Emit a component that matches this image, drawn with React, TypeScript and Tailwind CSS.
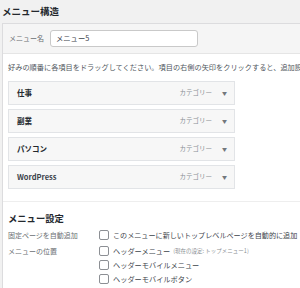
import React from "react";

const font = { fontFamily: '"Noto Sans CJK JP", "Noto Sans", sans-serif' };

function Item({ title, latin }: { title: string; latin?: boolean }) {
  return (
    <div className="flex h-[24px] w-[227px] items-center justify-between border border-[#e2e4e7] bg-[#f7f7f7] pl-[8px] pr-[7px]">
      <span className={latin ? "text-[7.5px] font-semibold text-[#3c434a]" : "text-[7.5px] font-bold text-[#23282d]"}>{title}</span>
      <span className="flex items-center gap-[10px]">
        <span className="text-[6.5px] text-[#8a8f94]">カテゴリー</span>
        <span className="text-[5px] text-[#72777c]">▼</span>
      </span>
    </div>
  );
}

function Check() {
  return <span className="inline-block h-[10px] w-[10px] shrink-0 rounded-[2px] border border-[#8c8f94] bg-white" />;
}

export default function App() {
  return (
    <div className="h-[288px] w-[300px] overflow-hidden bg-[#f1f1f1]" style={font}>
      <div className="flex h-[23px] items-center pl-[2px]">
        <h2 className="text-[9.5px] font-bold leading-none text-[#23282d]">メニュー構造</h2>
      </div>
      <div className="ml-[2px] h-[265px] w-[320px] border-l border-t border-[#dcdcde] bg-white">
        <div className="flex h-[30px] items-center gap-[6px] border-b border-[#e5e5e5] bg-[#f5f5f5] pl-[6px]">
          <span className="text-[7px] text-[#6b6f73]">メニュー名</span>
          <div className="flex h-[17px] w-[148px] items-center rounded-[3px] border border-[#c9c9c9] bg-white pl-[5px]">
            <span className="text-[7.3px] text-[#3c434a]">メニュー5</span>
          </div>
        </div>
        <div className="pl-[5px]">
          <p className="whitespace-nowrap pt-[8px] text-[7.2px] leading-[10px] text-[#50575e]">
            好みの順番に各項目をドラッグしてください。項目の右側の矢印をクリックすると、追加設定が表示されます。
          </p>
          <div className="mt-[9px] flex flex-col gap-[4px]">
            <Item title="仕事" />
            <Item title="副業" />
            <Item title="パソコン" />
            <Item title="WordPress" latin />
          </div>
        </div>
        <div className="mt-[12px] border-t border-[#eeeeee] pl-[5px]">
          <h3 className="pt-[10px] text-[9.3px] font-bold leading-[12px] text-[#23282d]">メニュー設定</h3>
          <div className="mt-[5px] flex h-[12px] items-center">
            <span className="w-[91px] text-[7px] text-[#6b6f73]">固定ページを自動追加</span>
            <Check />
            <span className="ml-[4px] whitespace-nowrap text-[7.1px] text-[#3c434a]">このメニューに新しいトップレベルページを自動的に追加</span>
          </div>
          <div className="mt-[4px] flex">
            <span className="w-[91px] pt-[1px] text-[7px] leading-[10px] text-[#6b6f73]">メニューの位置</span>
            <div className="flex flex-col gap-[2px]">
              <div className="flex h-[12px] items-center">
                <Check />
                <span className="ml-[4px] whitespace-nowrap text-[7.2px] text-[#3c434a]">ヘッダーメニュー</span>
                <span className="ml-[3px] whitespace-nowrap text-[5.5px] text-[#8a8f94]">(現在の設定: トップメニュー1)</span>
              </div>
              <div className="flex h-[12px] items-center">
                <Check />
                <span className="ml-[4px] whitespace-nowrap text-[7.2px] text-[#3c434a]">ヘッダーモバイルメニュー</span>
              </div>
              <div className="flex h-[12px] items-center">
                <Check />
                <span className="ml-[4px] whitespace-nowrap text-[7.2px] text-[#3c434a]">ヘッダーモバイルボタン</span>
              </div>
            </div>
          </div>
        </div>
      </div>
    </div>
  );
}
